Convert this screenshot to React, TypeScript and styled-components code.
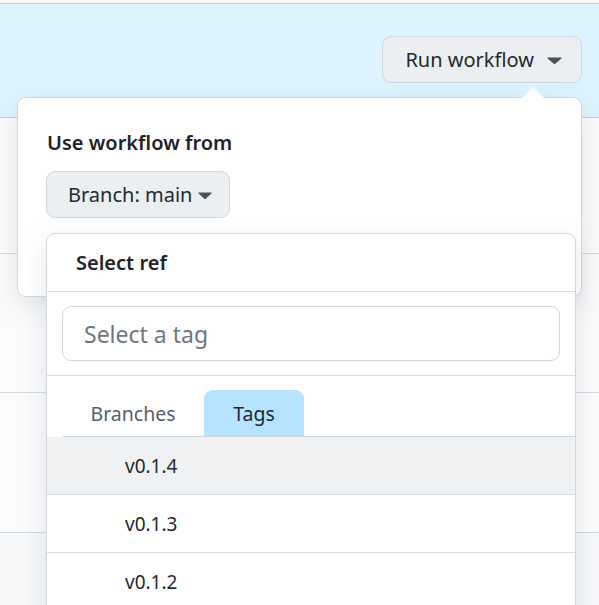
import styled, { createGlobalStyle } from "styled-components";

const GlobalStyle = createGlobalStyle`
  html, body {
    margin: 0;
    padding: 0;
    background: #ffffff;
    overflow: hidden;
  }
  body {
    font-family: "Noto Sans", "Liberation Sans", sans-serif;
    color: #1f2328;
  }
  * {
    box-sizing: border-box;
  }
`;

const tags = ["v0.1.4", "v0.1.3", "v0.1.2"];

function Caret({ w = 15 }: { w?: number }) {
  return (
    <svg width={w} height="8" viewBox="0 0 15 8" fill="#4b5159" preserveAspectRatio="none">
      <path d="M1 0.5h13a.6.6 0 01.42 1.02L7.92 7.1a.6.6 0 01-.84 0L.58 1.52A.6.6 0 011 .5z" />
    </svg>
  );
}

function App() {
  return (
    <Page>
      <GlobalStyle />
      <Banner>
        <RunWrap>
          <GrayButton $gap={13} $pad="0 19px 0 22px">
            Run workflow
            <Caret />
          </GrayButton>
          <Popover>
            <Arrow />
            <PopTitle>Use workflow from</PopTitle>
            <BranchWrap>
              <GrayButton $gap={6} $pad="0 17px 0 21px">
                Branch: main
                <Caret w={14} />
              </GrayButton>
              <RefMenu>
                <MenuHeader>Select ref</MenuHeader>
                <FilterBox>
                  <FilterInput placeholder="Select a tag" />
                </FilterBox>
                <Tabs>
                  <Tab>Branches</Tab>
                  <Tab $active>Tags</Tab>
                </Tabs>
                <List>
                  {tags.map((t, i) => (
                    <Item key={t} $hover={i === 0}>
                      {t}
                    </Item>
                  ))}
                </List>
              </RefMenu>
            </BranchWrap>
            <Spacer />
          </Popover>
        </RunWrap>
      </Banner>
      <ListRow $h={136} />
      <ListRow $h={139} />
      <ListRow $h={140} />
    </Page>
  );
}

const Page = styled.div`
  padding-top: 3px;
  background: #f6f8fa;
  min-height: 605px;
`;

const Banner = styled.div`
  height: 115px;
  background: #ddf4ff;
  border-top: 1px solid #a9d7f6;
  border-bottom: 1px solid #a9d7f6;
  display: flex;
  justify-content: flex-end;
  align-items: flex-start;
  padding: 32px 17px 0 0;
`;

const ListRow = styled.div<{ $h: number }>`
  height: ${(p) => p.$h}px;
  background: #fbfbfc;
  border-bottom: 1px solid #d0d7de;
`;

const RunWrap = styled.div`
  position: relative;
`;

const GrayButton = styled.button<{ $pad: string; $gap: number }>`
  display: flex;
  align-items: center;
  gap: ${(p) => p.$gap}px;
  height: 47px;
  padding: ${(p) => p.$pad};
  font-family: inherit;
  font-size: 20px;
  color: #24292f;
  background: #ebeff2;
  border: 1px solid #d0d7de;
  border-radius: 9px;
  cursor: pointer;

  svg {
    margin-top: 2px;
  }
`;

const Popover = styled.div`
  position: absolute;
  top: 61px;
  right: 0;
  width: 565px;
  background: #ffffff;
  border: 1px solid #d0d7de;
  border-radius: 9px;
  padding: 32px 29px 0 28px;
  box-shadow: 0 8px 24px rgba(140, 149, 159, 0.22);
  z-index: 5;
`;

const Arrow = styled.div`
  position: absolute;
  top: -11px;
  right: 37px;
  width: 0;
  height: 0;
  border-left: 11px solid transparent;
  border-right: 11px solid transparent;
  border-bottom: 11px solid #ffffff;
`;

const PopTitle = styled.div`
  font-size: 20px;
  font-weight: 600;
  line-height: 26px;
  margin-bottom: 15px;
  padding-left: 1px;
`;

const BranchWrap = styled.div`
  position: relative;
  display: inline-block;
`;

const Spacer = styled.div`
  height: 78px;
`;

const RefMenu = styled.div`
  position: absolute;
  top: 62px;
  left: 0;
  width: 530px;
  height: 420px;
  background: #ffffff;
  border: 1px solid #d0d7de;
  border-radius: 9px;
  overflow: hidden;
  box-shadow: 0 8px 24px rgba(140, 149, 159, 0.22);
  z-index: 6;
`;

const MenuHeader = styled.div`
  height: 58px;
  display: flex;
  align-items: center;
  padding-left: 29px;
  font-size: 20px;
  font-weight: 600;
  border-bottom: 1px solid #d8dee4;
`;

const FilterBox = styled.div`
  padding: 14px 15px;
  border-bottom: 1px solid #d8dee4;
`;

const FilterInput = styled.input`
  width: 100%;
  height: 55px;
  padding: 0 21px;
  font-family: inherit;
  font-size: 23px;
  color: #24292f;
  border: 1px solid #d0d7de;
  border-radius: 9px;
  outline: none;

  &::placeholder {
    color: #6e7781;
  }
`;

const Tabs = styled.div`
  display: flex;
  gap: 1px;
  margin-left: 16px;
  padding-top: 14px;
  border-bottom: 1px solid #d0d7de;
`;

const Tab = styled.div<{ $active?: boolean }>`
  width: ${(p) => (p.$active ? "100px" : "140px")};
  height: 46px;
  display: flex;
  align-items: center;
  justify-content: center;
  font-size: 19.5px;
  color: ${(p) => (p.$active ? "#24292f" : "#57606a")};
  background: ${(p) => (p.$active ? "#b6e3ff" : "transparent")};
  border-radius: 9px 9px 0 0;
`;

const List = styled.div`
  display: flex;
  flex-direction: column;
`;

const Item = styled.div<{ $hover?: boolean }>`
  height: 58px;
  display: flex;
  align-items: center;
  padding-left: 78px;
  font-size: 19px;
  color: #24292f;
  background: ${(p) => (p.$hover ? "#eff1f3" : "#ffffff")};
  border-bottom: 1px solid #d8dee4;
`;

export default App;
